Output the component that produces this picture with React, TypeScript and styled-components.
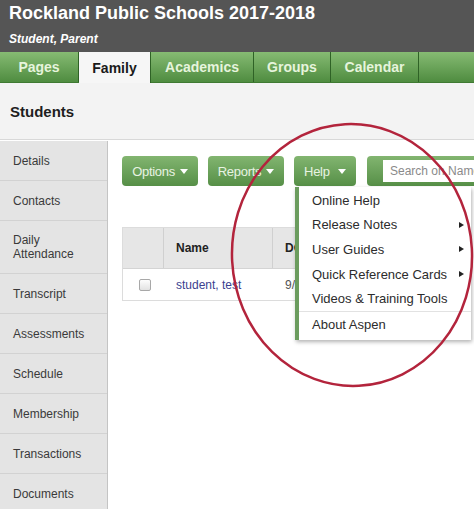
import React from "react";
import styled, { createGlobalStyle } from "styled-components";

const GlobalStyle = createGlobalStyle`
  html, body {
    margin: 0;
    padding: 0;
    background: #ffffff;
    font-family: "Liberation Sans", Arial, sans-serif;
  }
`;

const Page = styled.div`
  position: relative;
  width: 474px;
  height: 509px;
  overflow: hidden;
  background: #ffffff;
`;

const Header = styled.header`
  height: 52px;
  background: #555555;
  color: #ffffff;
  padding: 2px 0 0 9px;
  box-sizing: border-box;
`;

const Title = styled.h1`
  margin: 0;
  font-size: 18px;
  font-weight: bold;
  line-height: 22px;
`;

const Subtitle = styled.div`
  margin-top: 8px;
  font-size: 12px;
  font-weight: bold;
  font-style: italic;
  line-height: 14px;
`;

const TabBar = styled.nav`
  display: flex;
  height: 30px;
  background: linear-gradient(#86bb73, #4f8c40);
  border-bottom: 1px solid #3f7a32;
`;

const Tab = styled.div<{ $active?: boolean; $width: number }>`
  display: flex;
  align-items: center;
  justify-content: center;
  width: ${({ $width }) => $width}px;
  box-sizing: border-box;
  font-size: 14px;
  font-weight: bold;
  color: ${({ $active }) => ($active ? "#1a1a1a" : "#e6f4dc")};
  background: ${({ $active }) => ($active ? "#f6f6f6" : "transparent")};
  border-right: 1px solid #2f6226;
  margin-bottom: ${({ $active }) => ($active ? "-1px" : "0")};
`;

const SectionBar = styled.div`
  height: 56px;
  background: #f3f3f3;
  border-bottom: 1px solid #d8d8d8;
  display: flex;
  align-items: center;
  padding: 0 10px;
  font-size: 15px;
  font-weight: bold;
  color: #1e1e1e;
`;

const Body = styled.div`
  display: flex;
`;

const Sidebar = styled.aside`
  flex: 0 0 107px;
  background: #e4e4e4;
  border-right: 1px solid #c4c4c4;
  margin-top: 1px;
`;

const SideItem = styled.div<{ $tall?: boolean }>`
  height: ${({ $tall }) => ($tall ? 52 : 39)}px;
  display: flex;
  align-items: center;
  padding-left: 13px;
  font-size: 12px;
  line-height: 14px;
  color: #3a3a3a;
  border-bottom: 1px solid #d2d2d2;
`;

const Main = styled.main`
  flex: 1;
  min-width: 0;
  padding: 16px 0 0 14px;
`;

const Toolbar = styled.div`
  display: flex;
  gap: 10px;
`;

const GreenButton = styled.div<{ $width: number }>`
  position: relative;
  flex: 0 0 ${({ $width }) => $width}px;
  height: 30px;
  box-sizing: border-box;
  display: flex;
  align-items: center;
  justify-content: center;
  gap: 3px;
  border-radius: 4px;
  background: linear-gradient(#82b570, #568f47);
  color: #e8f3e2;
  font-size: 13px;
  letter-spacing: -0.3px;
`;

const Caret = styled.span`
  width: 0;
  height: 0;
  border-left: 4px solid transparent;
  border-right: 4px solid transparent;
  border-top: 5px solid #ffffff;
  margin-left: 2px;
`;

const SearchWrap = styled.div`
  flex: 1;
  min-width: 0;
  height: 30px;
  border-radius: 4px 0 0 4px;
  background: linear-gradient(#82b570, #568f47);
  display: flex;
  align-items: center;
  padding-left: 16px;
  margin-left: 1px;
`;

const SearchInput = styled.div`
  flex: 1;
  height: 22px;
  background: #ffffff;
  display: flex;
  align-items: center;
  padding-left: 7px;
  font-size: 12px;
  color: #8a8a8a;
  white-space: nowrap;
  overflow: hidden;
`;

const Table = styled.div`
  margin-top: 41px;
  width: 174px;
  overflow: hidden;
  border: 1px solid #dcdcdc;
  border-right: none;
`;

const HeadRow = styled.div`
  display: grid;
  grid-template-columns: 41px 109px 60px;
  height: 40px;
  background: #e6e6e6;
  border-bottom: 1px solid #d4d4d4;
`;

const HeadCell = styled.div`
  display: flex;
  align-items: center;
  padding-left: 12px;
  font-size: 12px;
  font-weight: bold;
  color: #222;
  border-right: 1px solid #d0d0d0;
  white-space: nowrap;
`;

const DataRow = styled.div`
  display: grid;
  grid-template-columns: 41px 109px 60px;
  height: 31px;
  background: #ffffff;
`;

const Cell = styled.div<{ $link?: boolean }>`
  display: flex;
  align-items: center;
  padding-left: 12px;
  font-size: 12px;
  white-space: nowrap;
  color: ${({ $link }) => ($link ? "#3b3f8f" : "#555")};
`;

const CheckBox = styled.span`
  width: 10px;
  height: 10px;
  margin-left: 4px;
  border: 1px solid #a8a8a8;
  border-radius: 2px;
  background: linear-gradient(#fdfdfd, #e2e2e2);
`;

const Dropdown = styled.div`
  position: absolute;
  top: 31px;
  left: 1px;
  width: 172px;
  background: #ffffff;
  border-left: 4px solid #6b9c5e;
  box-shadow: 1px 2px 4px rgba(0, 0, 0, 0.3);
  padding: 1px 0 3px;
  z-index: 2;
  letter-spacing: 0;
`;

const MenuItem = styled.div<{ $separated?: boolean }>`
  position: relative;
  height: 24.6px;
  display: flex;
  align-items: center;
  padding-left: 13px;
  font-size: 13px;
  color: #2c2c2c;
  white-space: nowrap;
  border-top: ${({ $separated }) => ($separated ? "1px solid #e2e2e2" : "none")};
`;

const SubArrow = styled.span`
  position: absolute;
  right: 7px;
  top: 50%;
  margin-top: -3px;
  width: 0;
  height: 0;
  border-top: 3px solid transparent;
  border-bottom: 3px solid transparent;
  border-left: 5px solid #222;
`;

const Annotation = styled.svg`
  position: absolute;
  left: 0;
  top: 0;
  pointer-events: none;
  z-index: 5;
`;

const tabs = [
  { label: "Pages", width: 79 },
  { label: "Family", width: 72, active: true },
  { label: "Academics", width: 103 },
  { label: "Groups", width: 77 },
  { label: "Calendar", width: 88 },
];

const sideItems = [
  "Details",
  "Contacts",
  "Daily Attendance",
  "Transcript",
  "Assessments",
  "Schedule",
  "Membership",
  "Transactions",
  "Documents",
];

const helpItems = [
  { label: "Online Help" },
  { label: "Release Notes", sub: true },
  { label: "User Guides", sub: true },
  { label: "Quick Reference Cards", sub: true },
  { label: "Videos & Training Tools" },
  { label: "About Aspen", separated: true },
];

export default function App() {
  return (
    <Page>
      <GlobalStyle />
      <Header>
        <Title>Rockland Public Schools 2017-2018</Title>
        <Subtitle>Student, Parent</Subtitle>
      </Header>
      <TabBar>
        {tabs.map((t) => (
          <Tab key={t.label} $width={t.width} $active={t.active}>
            {t.label}
          </Tab>
        ))}
      </TabBar>
      <SectionBar>Students</SectionBar>
      <Body>
        <Sidebar>
          {sideItems.map((s) => (
            <SideItem key={s} $tall={s === "Daily Attendance"}>
              {s === "Daily Attendance" ? (
                <span>
                  Daily
                  <br />
                  Attendance
                </span>
              ) : (
                s
              )}
            </SideItem>
          ))}
        </Sidebar>
        <Main>
          <Toolbar>
            <GreenButton $width={76}>
              Options
              <Caret />
            </GreenButton>
            <GreenButton $width={76}>
              Reports
              <Caret />
            </GreenButton>
            <GreenButton $width={62}>
              Help&nbsp;
              <Caret />
              <Dropdown>
                {helpItems.map((m) => (
                  <MenuItem key={m.label} $separated={m.separated}>
                    {m.label}
                    {m.sub && <SubArrow />}
                  </MenuItem>
                ))}
              </Dropdown>
            </GreenButton>
            <SearchWrap>
              <SearchInput>Search on Name</SearchInput>
            </SearchWrap>
          </Toolbar>
          <Table>
            <HeadRow>
              <HeadCell />
              <HeadCell>Name</HeadCell>
              <HeadCell>DOB</HeadCell>
            </HeadRow>
            <DataRow>
              <Cell>
                <CheckBox />
              </Cell>
              <Cell $link>student, test</Cell>
              <Cell>9/5/2005</Cell>
            </DataRow>
          </Table>
        </Main>
      </Body>
      <Annotation width="474" height="509" viewBox="0 0 474 509">
        <ellipse
          cx="352"
          cy="255"
          rx="120"
          ry="131"
          transform="rotate(-3 352 255)"
          fill="none"
          stroke="#b3243c"
          strokeWidth="2.5"
        />
      </Annotation>
    </Page>
  );
}
